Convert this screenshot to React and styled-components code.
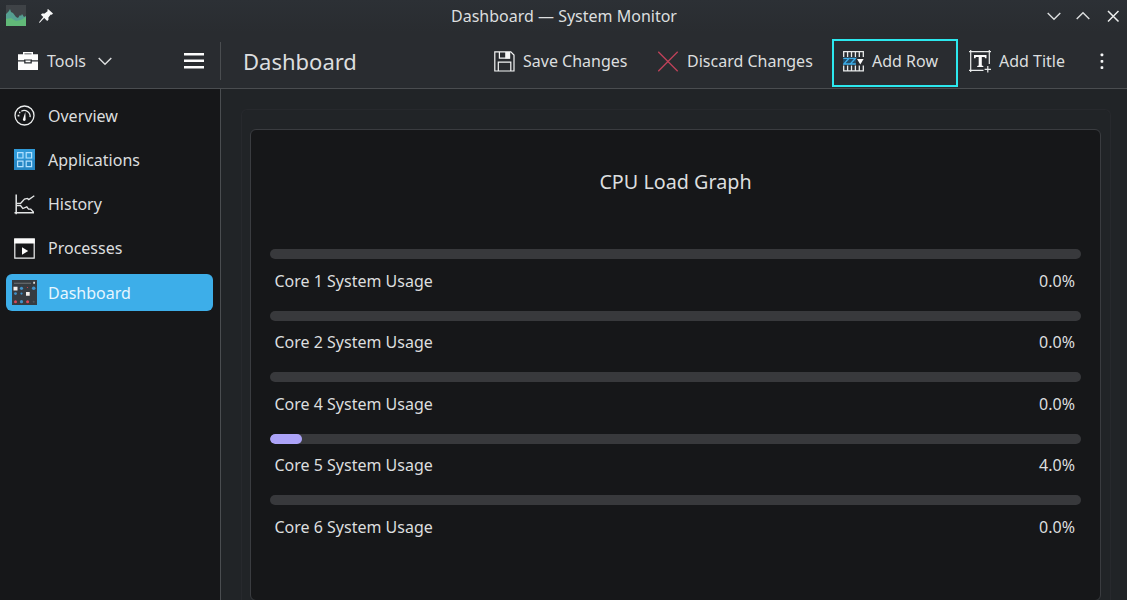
import React from "react"
import styled, { createGlobalStyle } from "styled-components"

const colors = {
  header: "#292c30",
  view: "#212427",
  panel: "#161719",
  line: "#4a4d50",
  text: "#dcdedf",
  accent: "#3daee9",
}

const GlobalStyle = createGlobalStyle`
  * {
    box-sizing: border-box;
  }

  body {
    margin: 0;
    overflow: hidden;
    background: ${colors.view};
  }
`

const Window = styled.div`
  display: flex;
  flex-direction: column;
  width: 1127px;
  height: 600px;
  overflow: hidden;
  font-family: "Noto Sans", sans-serif;
  font-size: 16px;
  line-height: 24px;
  color: ${colors.text};
  background: ${colors.view};
  white-space: nowrap;

  svg {
    display: block;
    flex: none;
  }
`

const TitleBar = styled.header`
  display: grid;
  grid-template-columns: 226px 1fr 226px;
  align-items: center;
  height: 32px;
  background: linear-gradient(#2c3035, ${colors.header});
`

const TitleIcons = styled.div`
  display: flex;
  align-items: center;
  gap: 12px;
  padding-left: 5px;
`

const WindowTitle = styled.div`
  padding-left: 1px;
  text-align: center;
  font-size: 16px;
`

const WindowButtons = styled.div`
  display: flex;
  justify-content: flex-end;
  gap: 13.5px;
  padding-right: 6.5px;
`

const Toolbar = styled.div`
  display: flex;
  height: 57px;
  padding-bottom: 1px;
  background: ${colors.header};
  border-bottom: 1px solid ${colors.line};
`

const ToolsArea = styled.div`
  display: flex;
  align-items: center;
  width: 221px;
  height: 38px;
  margin-top: 10px;
  padding: 0 16px 0 18px;
  border-right: 1px solid ${colors.line};
`

const ToolsLabel = styled.span`
  width: 50px;
  margin-left: 9px;
`

const MenuButton = styled.div`
  margin-left: auto;
`

const PageTitle = styled.h1`
  flex: 1;
  margin: 0;
  padding-left: 22px;
  font-size: 22px;
  font-weight: 400;
  line-height: 58px;
`

const Action = styled.div`
  display: flex;
  align-items: center;
  gap: 8px;
  width: ${props => props.$width}px;
  height: 48px;
  margin-top: 7px;
  padding-left: 9px;
  padding-bottom: 4px;
  border: 2px solid ${props => (props.$highlighted ? "#2ce8ee" : "transparent")};
`

const Overflow = styled.div`
  width: 42px;
  padding: 20px 0 0 14px;
`

const Body = styled.div`
  display: flex;
  flex: 1;
  min-height: 0;
`

const Sidebar = styled.nav`
  display: flex;
  flex-direction: column;
  gap: 7.3px;
  width: 221px;
  padding: 8px 7px 0 6px;
  background: ${colors.panel};
  border-right: 1px solid ${colors.line};
`

const NavItem = styled.div`
  display: flex;
  align-items: center;
  height: 37px;
  border-radius: 6px;
  color: ${props => (props.$active ? "#e6f6ff" : colors.text)};
  background: ${props => (props.$active ? colors.accent : "transparent")};
`

const NavIcon = styled.span`
  display: flex;
  justify-content: center;
  width: 37px;
  margin-right: 5px;
`

const Content = styled.main`
  flex: 1;
  padding: 20px 16px 0 20px;
`

const Frame = styled.section`
  height: 491px;
  padding: 19px 9px 0 8px;
  border: 1px solid #27292d;
  border-bottom: 0;
  border-radius: 6px 6px 0 0;
`

const Card = styled.article`
  height: 472px;
  padding: 40px 19px 0;
  background: ${colors.panel};
  border: 1px solid #3a3c40;
  border-radius: 6px;
`

const CardTitle = styled.h2`
  margin: 0;
  font-size: 19.75px;
  font-weight: 400;
  line-height: 24px;
  text-align: center;
`

const Cores = styled.div`
  margin-top: 55px;
`

const Core = styled.div`
  height: 61.5px;
`

const Track = styled.div`
  height: 10px;
  overflow: hidden;
  border-radius: 5px;
  background: #38393c;
`

const Fill = styled.div`
  height: 100%;
  border-radius: 5px;
  background: #aca3f8;
`

const CoreText = styled.div`
  display: flex;
  justify-content: space-between;
  padding: 9.6px 6px 0 4.5px;
`

const AppIcon = () => (
  <svg width="22" height="22" viewBox="0 0 22 22">
    <path fill="#3f4347" d="M1 0h20v21H1z" />
    <path
      fill="#559f91"
      d="M1 9l3-3 1-2 1 3 2 1 3 4 2 1 2-3 1 1 1-2 2 3 2-1v10H1z"
    />
    <path fill="#61b978" d="M1 14l5-1 5 3 5-1 5-3v9H1z" />
  </svg>
)

const PinIcon = () => (
  <svg width="14" height="14" viewBox="0 0 14 14" fill="#f7f8f8">
    <path d="M9 0l5 4.5-1.2 1.2-1-.2-2.4 3 .1 2.3-1.3 1.3-3-3L1 13.5 0 14l.4-1.2L4.3 8 1.9 5.7l1.2-1.2 2.5.1L8.8 2l-.6-1z" />
  </svg>
)

const Chevron = ({ up }) => (
  <svg
    width="16"
    height="16"
    viewBox="0 0 16 16"
    fill="none"
    stroke="#dcdedf"
    strokeWidth="1.4"
  >
    <path d={up ? "M1.7 11L8 4.7l6.3 6.3" : "M1.7 5L8 11.3 14.3 5"} />
  </svg>
)

const CloseIcon = () => (
  <svg width="16" height="16" fill="none" stroke="#eceeee" strokeWidth="1.5">
    <path d="M3 3l10.5 10.5M13.5 3L3 13.5" />
  </svg>
)

const ToolboxIcon = () => (
  <svg width="20" height="18" viewBox="0 0 20 18">
    <path fill="none" stroke="#fcfcfc" strokeWidth="1.4" d="M5.7 3V.8h8.6V3" />
    <path
      fill="#fcfcfc"
      d="M0 2.2h20v6h-6V7.5H6v.7H0zM0 9.5h6.2v2h7.6v-2H20V18H0zM7.5 8.6h5v1.7h-5z"
    />
  </svg>
)

const HamburgerIcon = () => (
  <svg width="20" height="16" fill="#fcfcfc">
    <path d="M0 0h20v2.4H0zM0 6.6h20V9H0zM0 13h20v2.4H0z" />
  </svg>
)

const SaveIcon = () => (
  <svg
    width="21"
    height="21"
    viewBox="0 0 21 21"
    fill="none"
    stroke="#f4f5f5"
    strokeWidth="1.2"
  >
    <path d="M.8.8h16l3.2 3.3V20H.8z" />
    <path d="M5.4 1v6.2h10.2V1M4.3 20v-8.8h12.5V20" />
    <path fill="#f4f5f5" stroke="none" d="M11.2 1H16v6.5h-4.8z" />
  </svg>
)

const DiscardIcon = () => (
  <svg width="21" height="21" fill="none" stroke="#bd4259" strokeWidth="1.3">
    <path d="M.3.8l19.4 19.4M19.7.8L.3 20.2" />
  </svg>
)

const AddRowIcon = () => (
  <svg width="21" height="21" viewBox="0 0 21 21" fill="none">
    <path
      stroke="#e9ebeb"
      strokeWidth="1.3"
      d="M.7 6V.7h19.6V6M4.6.7V6M8.5.7V6M12.4.7V6M16.3.7V6M.7 14.5v5.3h19.6v-5.3M4.6 14.5v5.3M8.5 14.5v5.3M12.4 14.5v5.3M16.3 14.5v5.3"
    />
    <path fill="#224e6b" d="M0 7h13v6.5H0z" />
    <path
      stroke="#3daee9"
      strokeWidth="1.3"
      d="M.3 7.3H6L.8 13h6M7 7.3h5.5L7.2 13h5.6"
    />
    <path fill="#fcfcfc" d="M14 8h6.6l-3.3 5.5z" />
  </svg>
)

const AddTitleIcon = () => (
  <svg width="22" height="23" viewBox="0 0 22 23" fill="none">
    <path
      stroke="#e9ebeb"
      strokeWidth="1.2"
      d="M1.7 0v22M0 1.7h22M20.3 0v14M0 20.3h14.5M18.8 16v6.5M15.6 19.3h6.4"
    />
    <path
      fill="#fcfcfc"
      d="M5 5h12.5v3.2h-1.4l-.5-1.3h-2.8v8.6l1.5.5v1H8.2v-1l1.5-.5V6.9H6.9l-.5 1.3H5z"
    />
  </svg>
)

const DotsIcon = () => (
  <svg width="6" height="18" fill="#f7f8f8">
    <rect x="1.6" y="1.6" width="2.7" height="2.7" rx=".7" />
    <rect x="1.6" y="8" width="2.7" height="2.7" rx=".7" />
    <rect x="1.6" y="14.2" width="2.7" height="2.7" rx=".7" />
  </svg>
)

const OverviewIcon = () => (
  <svg width="21" height="21" viewBox="0 0 21 21" fill="none" stroke="#eceeee">
    <circle cx="10.5" cy="10.5" r="9.5" strokeWidth="1.3" />
    <path strokeWidth="1.3" d="M7.3 6.2a6 6 0 018.8 6" />
    <path fill="#fcfcfc" stroke="none" d="M11.3 7l.3 7.2a1.4 1.4 0 11-2.5-.5z" />
    <path fill="#eceeee" stroke="none" d="M3.6 9.7h1.8v1.8H3.6zM5 6.8h1.4v1.4H5z" />
  </svg>
)

const ApplicationsIcon = () => (
  <svg width="21" height="21" viewBox="0 0 21 21">
    <path fill="#2687c5" d="M0 0h21v21H0z" />
    <path fill="#309ad8" d="M0 0h21v10.5H0z" />
    <path
      fill="none"
      stroke="#b2e1ff"
      strokeWidth="1.2"
      d="M3.6 3.6H9V9H3.6zM12.2 3.6h5.4V9h-5.4zM3.6 12.2H9v5.4H3.6zM12.2 12.2h5.4v5.4h-5.4z"
    />
  </svg>
)

const HistoryIcon = () => (
  <svg width="21" height="21" viewBox="0 0 21 21" fill="none" stroke="#e4e6e6">
    <path strokeWidth="1.5" d="M2.2.5v19.7M.5 18.7H20" />
    <path
      strokeWidth="1.3"
      d="M2.5 9.3h4.2l3.8-4.2 2.8-.7 1.5 1.2L20.3 1.8M2.5 11.5h4l2.3 3 4-1.7 1.7 2.4h2.3l2.8 3"
    />
  </svg>
)

const ProcessesIcon = () => (
  <svg width="21" height="21" viewBox="0 0 21 21">
    <path fill="none" stroke="#f0f2f2" strokeWidth="1.2" d="M.8 1h19.4v19.2H.8z" />
    <path fill="#fcfcfc" d="M.2.4h20.6v5H.2zM8 9.2l6.2 3.7L8 16.7z" />
  </svg>
)

const DashboardIcon = () => (
  <svg width="25" height="25" viewBox="0 0 25 25">
    <path fill="#363b40" d="M0 0h25v25H0z" />
    <path fill="#7c8084" d="M2 2.8h17v.8H2z" />
    <path fill="#f3eee9" d="M1.5 6.8h4v3.6h-4zM14 12h3.7v3.7H14zM21.3 1.8h1.6v2h-1.6z" />
    <g fill="#4192c9">
      <circle cx="9.5" cy="8.3" r="1.6" />
      <circle cx="21.7" cy="8.3" r="1.8" />
      <circle cx="3.5" cy="13.6" r="1.4" />
      <circle cx="9.5" cy="13.6" r="1.1" />
      <circle cx="9.5" cy="21.7" r="1.6" />
    </g>
    <g fill="#dc4758">
      <circle cx="3.5" cy="21.7" r="1.5" />
      <circle cx="15.6" cy="21.7" r="1.5" />
      <circle cx="15.5" cy="7.5" r=".6" />
    </g>
    <circle cx="21.7" cy="21.7" r="1" fill="#50565b" />
  </svg>
)

const pages = [
  { name: "Overview", icon: <OverviewIcon /> },
  { name: "Applications", icon: <ApplicationsIcon /> },
  { name: "History", icon: <HistoryIcon /> },
  { name: "Processes", icon: <ProcessesIcon /> },
  { name: "Dashboard", icon: <DashboardIcon />, active: true },
]

const actions = [
  { label: "Save Changes", icon: <SaveIcon />, width: 164 },
  { label: "Discard Changes", icon: <DiscardIcon />, width: 185 },
  { label: "Add Row", icon: <AddRowIcon />, width: 126, highlighted: true },
  { label: "Add Title", icon: <AddTitleIcon />, width: 127 },
]

const cores = [
  { id: 1, load: 0 },
  { id: 2, load: 0 },
  { id: 4, load: 0 },
  { id: 5, load: 4 },
  { id: 6, load: 0 },
]

const App = () => {
  return (
    <Window>
      <GlobalStyle />
      <TitleBar>
        <TitleIcons>
          <AppIcon />
          <PinIcon />
        </TitleIcons>
        <WindowTitle>Dashboard — System Monitor</WindowTitle>
        <WindowButtons>
          <Chevron />
          <Chevron up />
          <CloseIcon />
        </WindowButtons>
      </TitleBar>
      <Toolbar>
        <ToolsArea>
          <ToolboxIcon />
          <ToolsLabel>Tools</ToolsLabel>
          <Chevron />
          <MenuButton>
            <HamburgerIcon />
          </MenuButton>
        </ToolsArea>
        <PageTitle>Dashboard</PageTitle>
        {actions.map(({ label, icon, width, highlighted }) => (
          <Action key={label} $width={width} $highlighted={highlighted}>
            {icon}
            <span>{label}</span>
          </Action>
        ))}
        <Overflow>
          <DotsIcon />
        </Overflow>
      </Toolbar>
      <Body>
        <Sidebar>
          {pages.map(({ name, icon, active }) => (
            <NavItem key={name} $active={active}>
              <NavIcon>{icon}</NavIcon>
              {name}
            </NavItem>
          ))}
        </Sidebar>
        <Content>
          <Frame>
            <Card>
              <CardTitle>CPU Load Graph</CardTitle>
              <Cores>
                {cores.map(({ id, load }) => (
                  <Core key={id}>
                    <Track>
                      <Fill style={{ width: `${load}%` }} />
                    </Track>
                    <CoreText>
                      <span>Core {id} System Usage</span>
                      <span>{load.toFixed(1)}%</span>
                    </CoreText>
                  </Core>
                ))}
              </Cores>
            </Card>
          </Frame>
        </Content>
      </Body>
    </Window>
  )
}

export default App
